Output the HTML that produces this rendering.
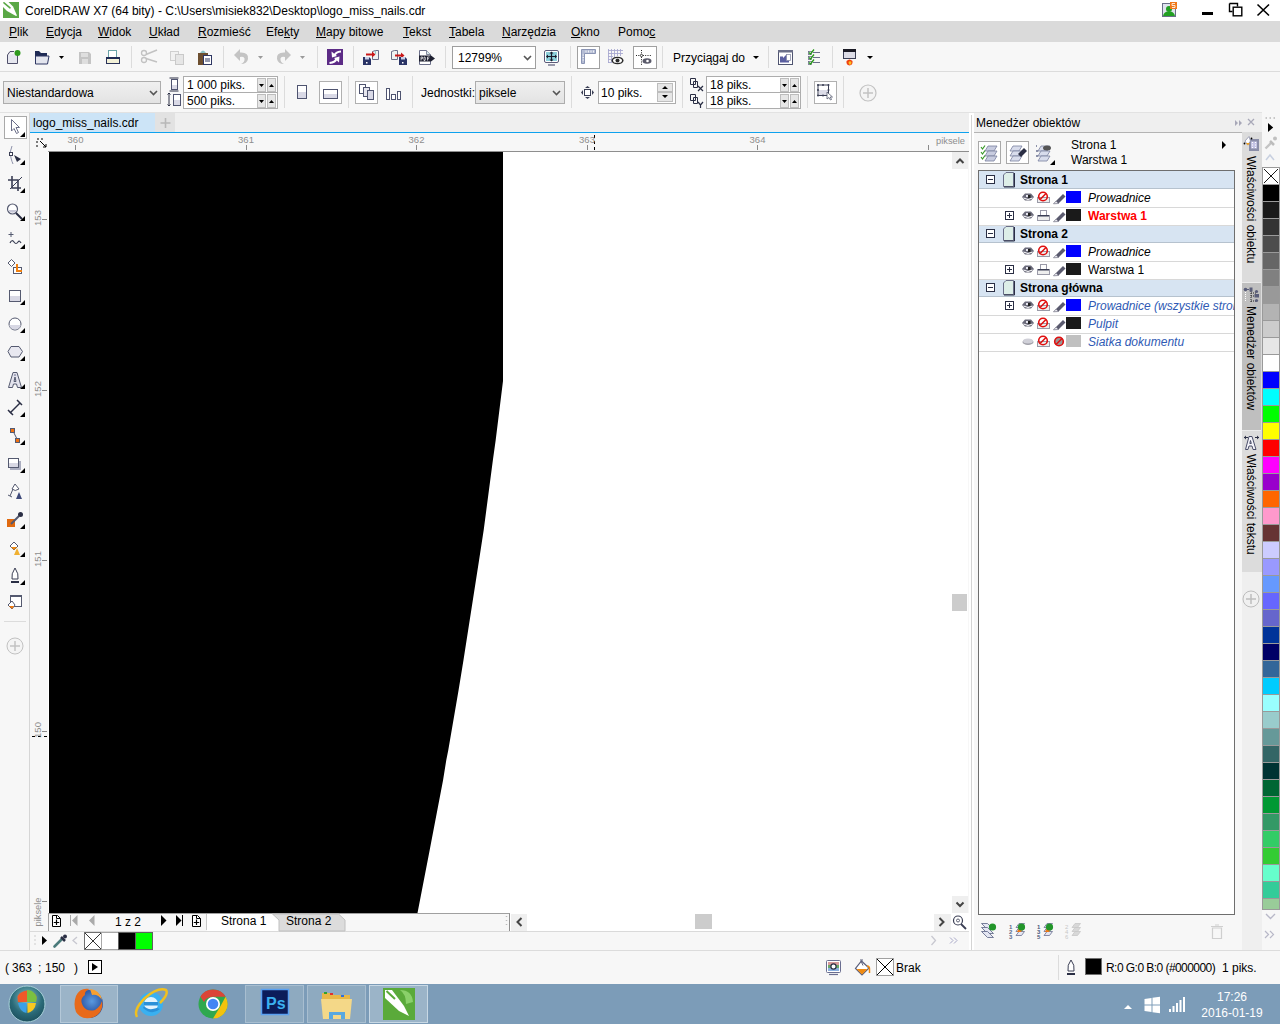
<!DOCTYPE html>
<html><head><meta charset="utf-8">
<style>
*{box-sizing:border-box;margin:0;padding:0}
html,body{width:1280px;height:1024px;overflow:hidden;background:#f7f7f7;font-family:"Liberation Sans",sans-serif;font-size:12px;color:#000}
.a{position:absolute}
.t{position:absolute;white-space:nowrap;line-height:14px}
#title{left:0;top:0;width:1280px;height:21px;background:#fff}
#menu{left:0;top:21px;width:1280px;height:21px;background:#dadada}
#tb1{left:0;top:42px;width:1280px;height:30px;background:#f7f7f7;border-bottom:1px solid #dcdcdc}
#tb2{left:0;top:72px;width:1280px;height:40px;background:#f7f7f7}
.sep{position:absolute;width:1px;background:#dcdcdc}
u{text-decoration:underline;text-underline-offset:1px;text-decoration-thickness:1px}
.box{position:absolute;background:#fff;border:1px solid #a0a0a0}
.row{position:absolute;left:979px;width:255px;height:18px;border-bottom:1px solid #e3e3e3;background:#fff}
.hdr{background:#d6e4f0;border-bottom:1px solid #b8c6d4}
.sw{position:absolute;left:1262px;width:17px;height:17px;border:1px solid #a8a8a8}
</style></head><body>
<!-- title bar -->
<div id="title" class="a">
  <svg class="a" style="left:3px;top:2px" width="16" height="16" viewBox="0 0 16 16"><rect width="16" height="16" fill="#5aa846"/><path d="M0 0 L5.5 0 L10 4.5 L14 13.5 L13 14 L4 9 L0 5 Z" fill="#fff"/><path d="M1 0.8 L7 5.8" stroke="#5aa846" stroke-width="1.6" stroke-linecap="round"/></svg>
  <div class="t" style="left:25px;top:4px">CorelDRAW X7 (64 bity) - C:\Users\misiek832\Desktop\logo_miss_nails.cdr</div>
</div>
<svg class="a" style="left:1150px;top:0" width="130" height="21" viewBox="1150 0 130 21">
 <rect x="1162.5" y="3.5" width="13" height="13" fill="#dfe3ee" stroke="#6a6e88"/>
 <circle cx="1169" cy="9" r="3" fill="#22a022"/><path d="M1163 16 Q1164 11 1169 11.5 Q1174 11 1175 16 Z" fill="#22a022"/>
 <rect x="1170" y="2" width="7" height="7" fill="#f07818"/>
 <path d="M1175 3.5 H1172 V5.5 H1175 V7.5 H1172" fill="none" stroke="#fff" stroke-width=".8"/>
 <rect x="1202" y="12" width="11" height="3" fill="#000"/>
 <path d="M1229.5 3.5 H1237.5 V6.5 M1229.5 3.5 V11.5 H1232.5" fill="none" stroke="#000" stroke-width="1.4"/>
 <rect x="1233.2" y="7.2" width="8.6" height="8.6" fill="#fff" stroke="#000" stroke-width="1.4"/>
 <path d="M1257.5 4.5 L1269 15.5 M1269 4.5 L1257.5 15.5" stroke="#000" stroke-width="1.6"/>
</svg>
<!-- menu -->
<div id="menu" class="a">
  <div class="t" style="left:9px;top:4px"><u>P</u>lik</div>
  <div class="t" style="left:46px;top:4px"><u>E</u>dycja</div>
  <div class="t" style="left:98px;top:4px"><u>W</u>idok</div>
  <div class="t" style="left:149px;top:4px"><u>U</u>kład</div>
  <div class="t" style="left:198px;top:4px"><u>R</u>ozmieść</div>
  <div class="t" style="left:266px;top:4px">Efe<u>k</u>ty</div>
  <div class="t" style="left:316px;top:4px"><u>M</u>apy bitowe</div>
  <div class="t" style="left:403px;top:4px"><u>T</u>ekst</div>
  <div class="t" style="left:449px;top:4px"><u>T</u>abela</div>
  <div class="t" style="left:502px;top:4px"><u>N</u>arzędzia</div>
  <div class="t" style="left:571px;top:4px"><u>O</u>kno</div>
  <div class="t" style="left:618px;top:4px">Pomo<u>c</u></div>
</div>
<div id="tb1" class="a"></div>
<!-- TB1 icons -->
<svg class="a" style="left:0;top:42px" width="880" height="29" viewBox="0 42 880 29">
 <!-- new -->
 <path d="M7.5 55 L7.5 63.5 L17.5 63.5 L17.5 53 M7.5 55 L10 51.5 L14 51.5" fill="#e6e7ef" stroke="#4f4f6a" stroke-width="1"/>
 <circle cx="17.5" cy="53" r="3" fill="#2e9a1d"/>
 <!-- open -->
 <path d="M35 51 L39 51 L41 53 L47 53 L47 57 L35 57 Z" fill="#1f2b55"/>
 <path d="M35.5 64 L35.5 56 L49 56 L47.5 64 Z" fill="#e3e5ee" stroke="#2e3763" stroke-width="1"/>
 <path d="M59 56 L64 56 L61.5 59 Z" fill="#000"/>
 <!-- save gray -->
 <path d="M79 52 L89 52 L91 54 L91 64 L79 64 Z" fill="#c4c4c4"/>
 <rect x="81" y="53" width="7" height="4" fill="#dedede"/>
 <rect x="82" y="59" width="6" height="5" fill="#dedede"/>
 <!-- print -->
 <rect x="108.5" y="50.5" width="8" height="7" fill="#fff" stroke="#6aa3a8"/>
 <rect x="106.5" y="57.5" width="13" height="6" fill="#f3f1d8" stroke="#2a3359"/>
 <rect x="106" y="57" width="14" height="2" fill="#1f2b55"/>
 <!-- sep -->
 <rect x="131" y="46" width="1" height="22" fill="#dcdcdc"/>
 <!-- scissors gray -->
 <circle cx="144" cy="53" r="2.5" fill="none" stroke="#c2c2c2" stroke-width="1.3"/>
 <circle cx="144" cy="60" r="2.5" fill="none" stroke="#c2c2c2" stroke-width="1.3"/>
 <path d="M146 54.5 L157 50 M146 58.5 L157 62" stroke="#c2c2c2" stroke-width="1.5"/>
 <!-- copy gray -->
 <rect x="170.5" y="51.5" width="8" height="9" fill="#f1f1f1" stroke="#cfcfcf"/>
 <rect x="175.5" y="54.5" width="8" height="10" fill="#e6e6e6" stroke="#c9c9c9"/>
 <!-- paste -->
 <rect x="198" y="53" width="10" height="12" fill="#6d4f30"/>
 <path d="M200 53 Q203 48 206 53 Z" fill="#8dc3c6"/>
 <rect x="203.5" y="55.5" width="8" height="9" fill="#fff" stroke="#2e3763"/>
 <path d="M205 59 H210 M205 61 H210" stroke="#2e3763"/>
 <rect x="223" y="46" width="1" height="22" fill="#dcdcdc"/>
 <!-- undo/redo gray -->
 <path d="M234 55 L240 49 L240 52.5 Q249 52 248 59 Q247 64 241 64 Q245 62 244.5 58.5 Q244 56 240 57 L240 61 Z" fill="#c4c4c4"/>
 <path d="M258 56 L263 56 L260.5 59 Z" fill="#9a9a9a"/>
 <path d="M291 55 L285 49 L285 52.5 Q276 52 277 59 Q278 64 284 64 Q280 62 280.5 58.5 Q281 56 285 57 L285 61 Z" fill="#c4c4c4"/>
 <path d="M300 56 L305 56 L302.5 59 Z" fill="#9a9a9a"/>
 <rect x="317" y="46" width="1" height="22" fill="#dcdcdc"/>
 <!-- corel connect -->
 <rect x="327" y="49" width="16" height="16" fill="#5c2b86"/>
 <path d="M341 51.5 Q335.5 52 334.5 55.5" fill="none" stroke="#fff" stroke-width="2.2"/>
 <path d="M331.5 51.5 L332 57.5 L337 56 Z" fill="#fff"/>
 <path d="M329.5 63 Q335.5 62.5 336.5 58.5" fill="none" stroke="#fff" stroke-width="2.2"/>
 <path d="M339.5 56.5 L339 62.5 L334 58 Z" fill="#fff"/>
 <rect x="353" y="46" width="1" height="22" fill="#dcdcdc"/>
 <!-- import -->
 <path d="M372.5 51.5 L375.5 50.5 H378.5 V59.5 H372.5 Z" fill="#eef2f2" stroke="#6a6e88"/>
 <path d="M375.5 51 V54" stroke="#7ac0c0" stroke-width=".8"/>
 <path d="M366 54.5 H373" stroke="#c81818" stroke-width="2"/><path d="M372 51.5 L375.5 54.5 L372 57.5 Z" fill="#c81818"/>
 <path d="M363 57 H369 L371 59 V65 H363 Z" fill="#2a3466"/><rect x="365" y="57" width="4" height="2.5" fill="#c8d0e8"/><rect x="366" y="62" width="1.5" height="1.5" fill="#fff"/>
 <!-- export -->
 <path d="M391.5 51.5 L394.5 50.5 H397.5 V59.5 H391.5 Z" fill="#eef2f2" stroke="#6a6e88"/>
 <path d="M395 55.5 H402" stroke="#c81818" stroke-width="2"/><path d="M401 52.5 L404.5 55.5 L401 58.5 Z" fill="#c81818"/>
 <path d="M399 57 H405 L407 59 V65 H399 Z" fill="#2a3466"/><rect x="401" y="57" width="4" height="2.5" fill="#c8d0e8"/><rect x="402" y="62" width="1.5" height="1.5" fill="#fff"/>
 <!-- pdf -->
 <path d="M419.5 50.5 H426.5 L430.5 54.5 V64.5 H419.5 Z" fill="#fff" stroke="#6a6e88"/>
 <path d="M426.5 50.5 V54.5 H430.5" fill="#d8e8e8" stroke="#6a6e88" stroke-width=".8"/>
 <path d="M419 55.5 H431 L435 58.5 L431 61.5 H419 Z" fill="#1e2030"/>
 <path d="M421 57 V60.5 M421 57 H422.5 V58.7 H421 M424 57 V60.5 H425 Q426 58.7 425 57 Z M427.5 60.5 V57 H429.5 M427.5 58.7 H429" fill="none" stroke="#fff" stroke-width=".7"/>
 <rect x="445" y="46" width="1" height="22" fill="#dcdcdc"/>
 <!-- zoom combo -->
 <rect x="452.5" y="46.5" width="83" height="22" fill="#fff" stroke="#9e9e9e"/>
 <path d="M524 56 L527.5 59.5 L531 56" fill="none" stroke="#555" stroke-width="1.6"/>
 <!-- fullscreen -->
 <rect x="544.5" y="50.5" width="14" height="12" rx="1.5" fill="#fff" stroke="#5a5a78"/>
 <rect x="546" y="52" width="11" height="9" fill="#8ccfda"/>
 <path d="M548 65 H555" stroke="#5a5a78" stroke-width="1.2"/>
 <path d="M551.5 52.5 V60.5 M547 56.5 H556" stroke="#1a1a2a" stroke-width="1.2"/>
 <path d="M551.5 51.5 L549.5 53.5 H553.5 Z M551.5 61.5 L549.5 59.5 H553.5 Z M546 56.5 L548 54.5 V58.5 Z M557 56.5 L555 54.5 V58.5 Z" fill="#1a1a2a"/>
 <rect x="570" y="46" width="1" height="22" fill="#dcdcdc"/>
 <!-- ruler framed -->
 <rect x="577.5" y="46.5" width="22" height="22" fill="#fff" stroke="#a0a0a0"/>
 <path d="M581.5 49.5 H595.5 V53.5 H584.5 V63.5 H581.5 Z" fill="#b4bcd4" stroke="#8a94b4" stroke-width="1"/>
 <path d="M586 50.5 V52.5 M588.5 50.5 V52.5 M591 50.5 V52.5 M593.5 50.5 V52.5 M582.5 55 H584 M582.5 57.5 H584 M582.5 60 H584" stroke="#fff" stroke-width=".8"/>
 <!-- grid eye -->
 <path d="M608.5 49 V63 M611.5 49 V63 M614.5 49 V58 M617.5 49 V56 M620.5 49 V56 M608 50.5 H623 M608 53.5 H623 M608 56.5 H613 M608 59.5 H612 M608 62.5 H611" stroke="#a8a8d0" stroke-width=".9"/>
 <ellipse cx="617.5" cy="60.5" rx="6" ry="3.8" fill="#2a2a2a"/><ellipse cx="617.5" cy="60.5" rx="4.5" ry="2.5" fill="#fff"/><circle cx="617.5" cy="60.5" r="2" fill="#2a2a2a"/>
 <!-- guides framed -->
 <rect x="633.5" y="46.5" width="23" height="22" fill="#fff" stroke="#a0a0a0"/>
 <path d="M641.5 50 V65 M636 55.5 H651" stroke="#222" stroke-dasharray="1 1.3" stroke-width="1"/>
 <circle cx="641.5" cy="55.5" r="1.2" fill="#fff" stroke="#222" stroke-width=".8"/>
 <ellipse cx="647" cy="61" rx="4.5" ry="2.8" fill="#5a5a6a"/><circle cx="647.5" cy="61" r="1.3" fill="#fff"/>
 <rect x="662" y="46" width="1" height="22" fill="#dcdcdc"/>
 <path d="M753 56 L759 56 L756 59 Z" fill="#000"/>
 <rect x="768" y="46" width="1" height="22" fill="#dcdcdc"/>
 <!-- options window -->
 <rect x="778.5" y="50.5" width="14" height="14" fill="#fff" stroke="#4f5470"/>
 <rect x="778" y="50" width="15" height="2.5" fill="#6a6e88"/>
 <path d="M780 62.5 V56.5 H783 V58 L786 55 H789 V62.5 Z" fill="#5a5ea0"/>
 <rect x="786.5" y="54.5" width="4" height="6" fill="#fff" stroke="#8a8ea8" stroke-width=".8"/>
 <!-- checklist -->
 <rect x="808.5" y="51.5" width="3" height="3" fill="#fff" stroke="#6a6e88" stroke-width=".8"/>
 <rect x="808.5" y="56.5" width="3" height="3" fill="#fff" stroke="#6a6e88" stroke-width=".8"/>
 <rect x="808.5" y="61.5" width="3" height="3" fill="#fff" stroke="#6a6e88" stroke-width=".8"/>
 <path d="M809 52.5 L810.5 54 L814 49.5 M809 57.5 L810.5 59 L814 54.5 M809 62.5 L810.5 64 L814 59.5" fill="none" stroke="#2a9a1a" stroke-width="1.3"/>
 <path d="M813 52.5 H820 M813 57.5 H820 M813 62.5 H820" stroke="#6a6e88" stroke-width="1"/>
 <rect x="832" y="46" width="1" height="22" fill="#dcdcdc"/>
 <!-- window flame -->
 <rect x="843.5" y="49.5" width="12" height="9" fill="#dcdce6" stroke="#3a3e54"/>
 <rect x="843" y="49" width="13" height="3" fill="#1a1a24"/>
 <path d="M846.5 61 Q849.5 58 852.5 61 Q853 65 849.5 65.5 Q846 65 846.5 61 Z" fill="#f04010"/>
 <path d="M848.5 62 Q850 60.5 851.5 62 Q851.5 64.5 850 65 Q848.5 64.5 848.5 62 Z" fill="#f8c020"/>
 <path d="M867 56 L873 56 L870 59 Z" fill="#000"/>
</svg>
<div class="t" style="left:458px;top:51px;font-size:12px">12799%</div>
<div class="t" style="left:673px;top:51px;font-size:12px">Przyciągaj do</div>
<div id="tb2" class="a"></div>
<svg class="a" style="left:0;top:72px" width="900" height="40" viewBox="0 72 900 40">
 <defs><linearGradient id="cg" x1="0" y1="0" x2="0" y2="1"><stop offset="0" stop-color="#f0f0f0"/><stop offset="1" stop-color="#e3e3e3"/></linearGradient></defs>
 <rect x="3.5" y="81.5" width="157" height="22" fill="url(#cg)" stroke="#adadad"/>
 <path d="M150 91 L153.5 94.5 L157 91" fill="none" stroke="#555" stroke-width="1.6"/>
 <!-- page size icons -->
 <path d="M169.5 78 H178.5 M169.5 91 H178.5" stroke="#2a2e44"/>
 <rect x="171.5" y="79.5" width="6" height="10" fill="#fff" stroke="#4f5470"/><rect x="172" y="85" width="5" height="4" fill="#d9d9e6"/>
 <path d="M169 93 V106" stroke="#2a2e44"/><path d="M167.5 94.5 L169 93 L170.5 94.5 M167.5 104.5 L169 106 L170.5 104.5" fill="none" stroke="#2a2e44"/>
 <rect x="173.5" y="94.5" width="7" height="11" fill="#fff" stroke="#4f5470"/><rect x="174" y="100" width="6" height="5" fill="#d9d9e6"/>
 <rect x="183.5" y="76.5" width="94" height="32" fill="#fff" stroke="#adadad"/>
 <path d="M184 92.5 H277" stroke="#adadad"/>
 <rect x="257.5" y="78.5" width="8" height="13" fill="#e6e6e6" stroke="#bdbdbd"/>
 <rect x="267.5" y="78.5" width="8" height="13" fill="#e6e6e6" stroke="#bdbdbd"/>
 <rect x="257.5" y="94.5" width="8" height="13" fill="#e6e6e6" stroke="#bdbdbd"/>
 <rect x="267.5" y="94.5" width="8" height="13" fill="#e6e6e6" stroke="#bdbdbd"/>
 <path d="M259 84 H264 L261.5 87 Z M269 87 H274 L271.5 84 Z M259 100 H264 L261.5 103 Z M269 103 H274 L271.5 100 Z" fill="#000"/>
 <rect x="284" y="76" width="1" height="32" fill="#dcdcdc"/>
 <!-- portrait -->
 <rect x="297.5" y="85.5" width="9" height="13" fill="#fff" stroke="#4f5470"/><rect x="298" y="92" width="8" height="6" fill="#d9d9e6"/>
 <rect x="319.5" y="81.5" width="22" height="22" fill="#fff" stroke="#b0b0b0"/>
 <rect x="323.5" y="89.5" width="14" height="9" fill="#fff" stroke="#4f5470"/><rect x="324" y="94" width="13" height="4" fill="#d9d9e6"/>
 <rect x="348" y="76" width="1" height="32" fill="#dcdcdc"/>
 <rect x="355.5" y="81.5" width="22" height="22" fill="#fff" stroke="#b0b0b0"/>
 <rect x="359.5" y="84.5" width="6" height="9" fill="#fff" stroke="#4f5470"/>
 <rect x="363.5" y="87.5" width="6" height="9" fill="#e6e6ee" stroke="#4f5470"/>
 <rect x="367.5" y="90.5" width="6" height="9" fill="#d9d9e6" stroke="#4f5470"/>
 <rect x="386.5" y="88.5" width="3" height="11" fill="#fff" stroke="#4f5470"/>
 <rect x="391.5" y="94.5" width="4" height="5" fill="#fff" stroke="#4f5470"/>
 <rect x="397.5" y="91.5" width="3" height="8" fill="#fff" stroke="#4f5470"/>
 <rect x="412" y="76" width="1" height="32" fill="#dcdcdc"/>
 <rect x="475.5" y="81.5" width="89" height="22" fill="url(#cg)" stroke="#adadad"/>
 <path d="M553 91 L556.5 94.5 L560 91" fill="none" stroke="#555" stroke-width="1.6"/>
 <rect x="571" y="76" width="1" height="32" fill="#dcdcdc"/>
 <!-- nudge -->
 <rect x="584.5" y="89.5" width="6" height="6" fill="#fff" stroke="#3a3e54"/>
 <path d="M587.5 86 L585 88 H590 Z M587.5 99 L585 97 H590 Z M581 92.5 L583 90 V95 Z M594 92.5 L592 90 V95 Z" fill="#3a3e54"/>
 <rect x="598.5" y="81.5" width="77" height="22" fill="#fff" stroke="#adadad"/>
 <rect x="657.5" y="83.5" width="15" height="8" fill="#e6e6e6" stroke="#bdbdbd"/>
 <rect x="657.5" y="92.5" width="15" height="9" fill="#e6e6e6" stroke="#bdbdbd"/>
 <path d="M662 89 H668 L665 86 Z M662 95 H668 L665 98 Z" fill="#000"/>
 <rect x="682" y="76" width="1" height="32" fill="#dcdcdc"/>
 <!-- xy dup icons -->
 <path d="M690.5 78.5 H695.5 V84.5 H690.5 Z M693.5 81.5 H697.5 V87.5 H693.5 Z" fill="none" stroke="#2a2e44"/>
 <path d="M698 86 L703 91 M703 86 L698 91" stroke="#2a2e44" stroke-width="1.2"/>
 <path d="M690.5 94.5 H695.5 V100.5 H690.5 Z M693.5 97.5 H697.5 V103.5 H693.5 Z" fill="none" stroke="#2a2e44"/>
 <path d="M698 102 L700.5 105 L703 102 M700.5 105 V108" fill="none" stroke="#2a2e44" stroke-width="1.2"/>
 <rect x="706.5" y="76.5" width="94" height="32" fill="#fff" stroke="#adadad"/>
 <path d="M707 92.5 H800" stroke="#adadad"/>
 <rect x="780.5" y="78.5" width="8" height="13" fill="#e6e6e6" stroke="#bdbdbd"/>
 <rect x="790.5" y="78.5" width="8" height="13" fill="#e6e6e6" stroke="#bdbdbd"/>
 <rect x="780.5" y="94.5" width="8" height="13" fill="#e6e6e6" stroke="#bdbdbd"/>
 <rect x="790.5" y="94.5" width="8" height="13" fill="#e6e6e6" stroke="#bdbdbd"/>
 <path d="M782 84 H787 L784.5 87 Z M792 87 H797 L794.5 84 Z M782 100 H787 L784.5 103 Z M792 103 H797 L794.5 100 Z" fill="#000"/>
 <rect x="807" y="76" width="1" height="32" fill="#dcdcdc"/>
 <rect x="814.5" y="81.5" width="22" height="22" fill="#fff" stroke="#b0b0b0"/>
 <rect x="818" y="85" width="10.5" height="10.5" fill="#fff" stroke="#3a3e54" stroke-width="1"/>
 <rect x="819" y="90" width="9" height="5" fill="#dcdce8"/>
 <circle cx="818" cy="85" r="1" fill="#3a3e54"/><circle cx="823" cy="85" r="1" fill="#3a3e54"/><circle cx="828.5" cy="85" r="1" fill="#3a3e54"/>
 <circle cx="818" cy="90" r="1" fill="#3a3e54"/><circle cx="828.5" cy="90" r="1" fill="#3a3e54"/>
 <circle cx="818" cy="95.5" r="1" fill="#3a3e54"/><circle cx="823" cy="95.5" r="1" fill="#3a3e54"/>
 <path d="M827 92 L827 99 L829 97.5 L830.5 100 L831.5 99.5 L830.3 97 L832.5 97 Z" fill="#fff" stroke="#555a70" stroke-width=".8"/>
 <rect x="843" y="76" width="1" height="32" fill="#dcdcdc"/>
 <circle cx="868" cy="93" r="8" fill="#f4f4f4" stroke="#c2c2c2" stroke-width="1.2"/>
 <path d="M868 88 V98 M863 93 H873" stroke="#c2c2c2" stroke-width="1.5"/>
</svg>
<div class="t" style="left:7px;top:86px;font-size:12px">Niestandardowa</div>
<div class="t" style="left:187px;top:78px;font-size:12px">1 000 piks.</div>
<div class="t" style="left:187px;top:94px;font-size:12px">500 piks.</div>
<div class="t" style="left:421px;top:86px;font-size:12px">Jednostki:</div>
<div class="t" style="left:479px;top:86px;font-size:12px">piksele</div>
<div class="t" style="left:601px;top:86px;font-size:12px">10 piks.</div>
<div class="t" style="left:710px;top:78px;font-size:12px">18 piks.</div>
<div class="t" style="left:710px;top:94px;font-size:12px">18 piks.</div>

<!-- toolbox -->
<div class="a" style="left:0;top:112px;width:30px;height:838px;background:#f7f7f7;border-right:1px solid #d6d6d6"></div>
<svg class="a" style="left:0;top:112px" width="29" height="560" viewBox="0 112 29 560">
 <rect x="4.5" y="116.5" width="22" height="22" fill="#fff" stroke="#a9a9a9"/>
 <path d="M11.5 119.5 L11.5 131 L14 128.5 L16.5 133.5 L18.5 132.5 L16 127.5 L19.5 127.5 Z" fill="#fff" stroke="#6a6e88" stroke-width="1"/>
 <path d="M20 137 L25 132 L25 137 Z" fill="#000"/>
 <!-- shape -->
 <path d="M12 146 Q9 152 11 158 Q12 162 13 164" fill="none" stroke="#8e92aa" stroke-width="1"/>
 <rect x="9.5" y="152.5" width="3" height="3" fill="#fff" stroke="#3a3e54"/>
 <path d="M14 155 L21 159 L17 162 Z" fill="#2a2e44"/>
 <path d="M20 165 L25 160 L25 165 Z" fill="#000"/>
 <!-- crop -->
 <path d="M12 176 V188 H21 M8 180 H18 V191" fill="none" stroke="#3a3e54" stroke-width="1.6"/>
 <path d="M10 189 L22 177" stroke="#3a3e54" stroke-width="1"/>
 <path d="M20 193 L25 188 L25 193 Z" fill="#000"/>
 <!-- zoom -->
 <circle cx="12.5" cy="209" r="5" fill="#fff" stroke="#555a70" stroke-width="1.2"/>
 <path d="M8 210 A5 5 0 0 0 17 210 Z" fill="#c8c8d8"/>
 <path d="M16 213 L22 219" stroke="#2a2e44" stroke-width="2"/>
 <path d="M20 221 L25 216 L25 221 Z" fill="#000"/>
 <!-- freehand -->
 <path d="M8.5 234.5 H13.5 M11 232 V237" stroke="#555a70" stroke-width="1"/>
 <path d="M10 243 Q12 239 14 242 Q16 245 18 242 Q19.5 240 21 243" fill="none" stroke="#3a3e54" stroke-width="1.2"/>
 <path d="M20 249 L25 244 L25 249 Z" fill="#000"/>
 <!-- smart fill -->
 <path d="M8 263 L11.5 259.5 L15 263 L11.5 266.5 Z" fill="#fff" stroke="#555a70"/>
 <rect x="13.5" y="267.5" width="8" height="6" fill="#fff" stroke="#555a70"/>
 <path d="M17 264 V271 H22" fill="none" stroke="#f08010" stroke-width="2"/>
 <!-- rectangle -->
 <rect x="9.5" y="290.5" width="11" height="11" fill="#fff" stroke="#555a70" stroke-width="1"/>
 <rect x="10" y="296" width="10" height="5" fill="#d8d8e4"/>
 <path d="M20 305 L25 300 L25 305 Z" fill="#000"/>
 <!-- ellipse -->
 <circle cx="15" cy="324" r="6" fill="#fff" stroke="#555a70" stroke-width="1"/>
 <path d="M9.2 325 A6 6 0 0 0 20.8 325 Z" fill="#d8d8e4"/>
 <path d="M20 333 L25 328 L25 333 Z" fill="#000"/>
 <!-- polygon -->
 <path d="M11 346.5 H19 L22.5 351.5 L19 357 H11 L8 351.5 Z" fill="#e8e8f0" stroke="#555a70"/>
 <path d="M20 361 L25 356 L25 361 Z" fill="#000"/>
 <!-- text -->
 <path d="M8.5 387.5 L13 372.5 L17 372.5 L21.5 387.5 L17.5 387.5 L16.5 384 L13.5 384 L12.5 387.5 Z M14 381.5 H16 L15 377 Z" fill="#e4e4ee" fill-rule="evenodd" stroke="#555a70" stroke-width="1"/><path d="M14.2 376 L15 374 L15.8 376" stroke="#8a8ea8" fill="none" stroke-width=".8"/>
 <path d="M20 389 L25 384 L25 389 Z" fill="#000"/>
 <!-- dimension -->
 <path d="M10 413 L20 403" stroke="#2a2e44" stroke-width="1.5"/>
 <path d="M8 410 L13 415 M17 400 L22 405" stroke="#2a2e44" stroke-width="1.5"/>
 <path d="M20 417 L25 412 L25 417 Z" fill="#000"/>
 <!-- connector -->
 <path d="M12.5 430 L17.5 440" stroke="#555a70"/>
 <rect x="10.5" y="428.5" width="4" height="4" fill="#f07010" stroke="#555a70"/>
 <rect x="15.5" y="438.5" width="4" height="4" fill="#f07010" stroke="#555a70"/>
 <path d="M20 445 L25 440 L25 445 Z" fill="#000"/>
 <!-- shadow -->
 <rect x="10" y="461" width="11" height="9" fill="#8a8ea8" opacity=".7"/>
 <rect x="8.5" y="458.5" width="10" height="9" fill="#fff" stroke="#555a70"/>
 <rect x="9" y="463" width="9" height="4" fill="#d8d8e4"/>
 <path d="M20 473 L25 468 L25 473 Z" fill="#000"/>
 <!-- transparency -->
 <path d="M12 489 Q15 492 19 489 L15 484 Z" fill="#fff" stroke="#555a70"/>
 <path d="M13 489 L10 496 M8 495 L12 497" stroke="#555a70"/>
 <path d="M16 499 L19 492 L22 499 Z" fill="#3e4a7a"/>
 <!-- eyedropper -->
 <rect x="7" y="519" width="8" height="8" fill="#e06a10"/>
 <path d="M11 524 L19 516" stroke="#555a70" stroke-width="2"/>
 <circle cx="20.5" cy="514.5" r="2.5" fill="#2a2e44"/>
 <path d="M20 529 L25 524 L25 529 Z" fill="#000"/>
 <!-- fill -->
 <path d="M10 546 L14 542 L18 546 L14 550 Z" fill="#fff" stroke="#555a70"/>
 <path d="M11 547 L14 550 L17 547 Z" fill="#f08a10"/>
 <path d="M14 555 L17 548 L20 555 Z" fill="#f0b030"/>
 <path d="M20 557 L25 552 L25 557 Z" fill="#000"/>
 <!-- pen -->
 <path d="M15 568 Q19 574 18 579 H12 Q11 574 15 568 Z" fill="#fff" stroke="#3a3e54" stroke-width="1"/>
 <rect x="11" y="581" width="8" height="2" fill="#2a2e44"/>
 <path d="M20 585 L25 580 L25 585 Z" fill="#000"/>
 <!-- interactive -->
 <rect x="10.5" y="595.5" width="11" height="11" fill="#fff" stroke="#555a70"/>
 <rect x="10" y="595" width="12" height="2" fill="#555a70"/>
 <path d="M8 605 L12 601 L15 605 L12 609 Z" fill="#fff" stroke="#555a70"/>
 <path d="M9 606 L12 609 L14 606 Z" fill="#f07a10"/>
 <rect x="4" y="621" width="22" height="1" fill="#dcdcdc"/>
 <circle cx="15" cy="646" r="8" fill="#f4f4f4" stroke="#c2c2c2" stroke-width="1"/>
 <path d="M15 641 V651 M10 646 H20" stroke="#c2c2c2" stroke-width="1.5"/>
</svg>

<!-- doc tab row -->
<div class="a" style="left:30px;top:113px;width:939px;height:20px;background:#efefef;border-bottom:1px solid #0ea2ee"></div>
<div class="a" style="left:30px;top:113px;width:125px;height:19px;background:#cce4f7"></div>
<div class="t" style="left:33px;top:116px">logo_miss_nails.cdr</div>
<div class="a" style="left:155px;top:113px;width:20px;height:19px;background:#e2e2e2"></div>
<svg class="a" style="left:155px;top:113px" width="20" height="19"><path d="M10.5 5 V15 M5.5 10 H15.5" stroke="#b8b8b8" stroke-width="1.6"/></svg>

<!-- rulers -->
<div class="a" style="left:30px;top:133px;width:939px;height:18px;background:#f7f7f7"></div>
<div class="a" style="left:48px;top:151px;width:921px;height:1px;background:#8e8e8e"></div>
<div class="a" style="left:30px;top:152px;width:18px;height:779px;background:#f7f7f7"></div>
<svg class="a" style="left:30px;top:133px" width="939" height="798" viewBox="30 133 939 798">
 <rect x="75" y="145" width="1" height="5" fill="#8a8a8a"/>
 <rect x="246" y="145" width="1" height="5" fill="#8a8a8a"/>
 <rect x="416" y="145" width="1" height="5" fill="#8a8a8a"/>
 <rect x="587" y="145" width="1" height="5" fill="#8a8a8a"/>
 <rect x="757" y="145" width="1" height="5" fill="#8a8a8a"/>
 <rect x="928" y="145" width="1" height="5" fill="#8a8a8a"/>
 <path d="M594.5 135 V138 M594.5 141 V144 M594.5 147 V150" stroke="#000" stroke-width="1"/>
 <rect x="42" y="219" width="5" height="1" fill="#8a8a8a"/>
 <rect x="42" y="390" width="5" height="1" fill="#8a8a8a"/>
 <rect x="42" y="560" width="5" height="1" fill="#8a8a8a"/>
 <rect x="42" y="731" width="5" height="1" fill="#8a8a8a"/>
 <rect x="42" y="901" width="5" height="1" fill="#8a8a8a"/>
 <path d="M32 736.5 H35 M38 736.5 H41 M44 736.5 H47" stroke="#000" stroke-width="1"/>
 <path d="M37 139 H39 M41 139 H43 M37 141 V143 M37 145 V147 M40 141 L46 147 M46 144 V147 H43" fill="none" stroke="#000" stroke-width="1"/>
</svg>
<div class="t" style="left:55.5px;top:132.5px;width:40px;text-align:center;font-size:9.5px;color:#8e8e8e">360</div>
<div class="t" style="left:226px;top:132.5px;width:40px;text-align:center;font-size:9.5px;color:#8e8e8e">361</div>
<div class="t" style="left:396.5px;top:132.5px;width:40px;text-align:center;font-size:9.5px;color:#8e8e8e">362</div>
<div class="t" style="left:567px;top:132.5px;width:40px;text-align:center;font-size:9.5px;color:#8e8e8e">363</div>
<div class="t" style="left:737.5px;top:132.5px;width:40px;text-align:center;font-size:9.5px;color:#8e8e8e">364</div>
<div class="t" style="left:929px;top:134px;width:36px;text-align:right;font-size:9.3px;color:#8e8e8e">piksele</div>
<div class="t" style="left:19px;top:211px;width:40px;height:14px;text-align:center;font-size:9.5px;color:#8e8e8e;transform:rotate(-90deg);transform-origin:20px 7px;left:17.5px">153</div>
<div class="t" style="left:19px;top:382px;width:40px;height:14px;text-align:center;font-size:9.5px;color:#8e8e8e;transform:rotate(-90deg);transform-origin:20px 7px;left:17.5px">152</div>
<div class="t" style="left:19px;top:552px;width:40px;height:14px;text-align:center;font-size:9.5px;color:#8e8e8e;transform:rotate(-90deg);transform-origin:20px 7px;left:17.5px">151</div>
<div class="t" style="left:19px;top:723px;width:40px;height:14px;text-align:center;font-size:9.5px;color:#8e8e8e;transform:rotate(-90deg);transform-origin:20px 7px;left:17.5px">150</div>
<div class="t" style="left:18px;top:905px;width:40px;height:14px;text-align:center;font-size:9.3px;color:#8e8e8e;transform:rotate(-90deg);transform-origin:20px 7px">piksele</div>

<!-- canvas -->
<div class="a" style="left:48px;top:152px;width:920px;height:761px;background:#fff;overflow:hidden">
<svg width="920" height="761" style="position:absolute;left:0;top:0"><polygon points="1,0 455,0 455.0,229.0 447.7,288.0 444.9,308.0 435.7,378.0 431.1,408.0 415.5,508.0 410.6,538.0 400.3,598.0 398.3,608.0 395.1,628.0 383.6,688.0 381.7,698.0 369.5,761.0 1,761" fill="#000"/></svg>
</div>
<!-- vscroll -->
<div class="a" style="left:952px;top:152px;width:16px;height:17px;background:#efefef"></div>
<div class="a" style="left:952px;top:896px;width:16px;height:17px;background:#efefef"></div>
<div class="a" style="left:952px;top:594px;width:15px;height:17px;background:#cccccc"></div>
<svg class="a" style="left:952px;top:152px" width="16" height="761" viewBox="952 152 16 761">
 <path d="M956.5 163 L960 159.5 L963.5 163" fill="none" stroke="#444" stroke-width="2"/>
 <path d="M956.5 902.5 L960 906 L963.5 902.5" fill="none" stroke="#444" stroke-width="2"/>
</svg>
<!-- page nav bar -->
<div class="a" style="left:48px;top:913px;width:462px;height:18px;background:#f7f7f7;border-top:1px solid #a0a0a0;border-left:1px solid #a0a0a0;border-right:1px solid #8e8e8e"></div>
<div class="a" style="left:510px;top:913px;width:459px;height:18px;background:#fff"></div>
<div class="a" style="left:511px;top:914px;width:16px;height:17px;background:#efefef"></div>
<div class="a" style="left:934px;top:914px;width:17px;height:17px;background:#efefef"></div>
<div class="a" style="left:695px;top:914px;width:17px;height:15px;background:#cccccc"></div>
<div class="a" style="left:30px;top:931px;width:939px;height:1px;background:#dadada"></div>
<svg class="a" style="left:48px;top:913px" width="921" height="37" viewBox="48 913 921 37">
 <!-- add page -->
 <path d="M52.5 915.5 H57.5 L60.5 918.5 V926.5 H52.5 Z" fill="#fff" stroke="#000"/>
 <path d="M56.5 915.5 V918.5 H60.5" fill="none" stroke="#000"/>
 <path d="M56.5 919.5 V925 M53.8 922.5 H59.2" stroke="#000" stroke-width="1.2"/>
 <path d="M70.5 915 V926" stroke="#aaa"/><path d="M77.5 915 L72 920.5 L77.5 926 Z" fill="#aaa"/>
 <path d="M94.5 915 L89 920.5 L94.5 926 Z" fill="#aaa"/>
 <path d="M161 915 L166.5 920.5 L161 926 Z" fill="#000"/>
 <path d="M176 915 L181.5 920.5 L176 926 Z" fill="#000"/><path d="M182.5 915 V926" stroke="#000"/>
 <path d="M192.5 915.5 H197.5 L200.5 918.5 V926.5 H192.5 Z" fill="#fff" stroke="#000"/>
 <path d="M196.5 915.5 V918.5 H200.5" fill="none" stroke="#000"/>
 <path d="M196.5 919.5 V925 M193.8 922.5 H199.2" stroke="#000" stroke-width="1.2"/>
 <path d="M206.5 914 V930" stroke="#c8c8c8"/>
 <!-- tabs -->
 <path d="M207 914 H272.5 L279 920 V931 H207 Z" fill="#fff"/>
 <path d="M279 931 V920 L272.5 914 H338.5 L345 920 V931 Z" fill="#dcdcdc" stroke="#c0c0c0" stroke-width="1"/>
 <path d="M506.5 916 V917 M506.5 920 V921 M506.5 924 V925" stroke="#bbb" stroke-width="1.5"/>
 <path d="M521.5 918 L517.5 922 L521.5 926" fill="none" stroke="#444" stroke-width="2"/>
 <path d="M939.5 918 L943.5 922 L939.5 926" fill="none" stroke="#444" stroke-width="2"/>
 <circle cx="958" cy="920.5" r="4.5" fill="none" stroke="#3a3e54" stroke-width="1.2"/>
 <path d="M961 924 L966 929" stroke="#3a3e54" stroke-width="1.8"/>
 <circle cx="958" cy="920.5" r="1.5" fill="none" stroke="#3a3e54" stroke-width=".8"/>
 <!-- doc palette row -->

 <path d="M54.5 946.5 L62 939" stroke="#4a7a7a" stroke-width="2.6" stroke-linecap="round"/><path d="M61 937 L65 941" stroke="#2a2e44" stroke-width="2.5"/><circle cx="65" cy="936.5" r="2" fill="#2a2e44"/>
 <path d="M77 937 L73 940.5 L77 944" fill="none" stroke="#c8c8d0" stroke-width="1.3"/>
 <rect x="84.5" y="932.5" width="17" height="17" fill="#fff" stroke="#707070"/>
 <path d="M85 933 L101 949 M101 933 L85 949" stroke="#000" stroke-width=".8"/>
 <rect x="101.5" y="932.5" width="17" height="17" fill="#fff" stroke="#a8a8a8"/>
 <rect x="118.5" y="932.5" width="17" height="17" fill="#000" stroke="#606060"/>
 <rect x="135.5" y="932.5" width="17" height="17" fill="#00ff00" stroke="#606060"/>
 <path d="M931.5 936 L935.5 940.5 L931.5 945" fill="none" stroke="#c8c8d0" stroke-width="1.3"/>
 <path d="M950 937.5 L953 940.5 L950 943.5 M954 937.5 L957 940.5 L954 943.5" fill="none" stroke="#a8a8c8" stroke-width="1"/>
</svg>
<svg class="a" style="left:30px;top:931px" width="20" height="19" viewBox="30 931 20 19"><path d="M35 935.5 V936.5 M35 939.5 V940.5 M35 943.5 V944.5" stroke="#b8b8b8" stroke-width="1.3"/><path d="M42 936 L47 940.5 L42 945 Z" fill="#000"/></svg>
<div class="t" style="left:48px;top:931px;width:921px;height:19px"></div>
<div class="t" style="left:115px;top:915px">1 z 2</div>
<div class="t" style="left:221px;top:914px">Strona 1</div>
<div class="t" style="left:286px;top:914px">Strona 2</div>
<!-- docker -->
<div class="a" style="left:0;top:112px;width:1280px;height:1px;background:#e2e2e2"></div>
<div class="a" style="left:969px;top:113px;width:5px;height:837px;background:#fff"></div>
<div class="a" style="left:971px;top:115px;width:1px;height:835px;background:#d4d4d4"></div>
<div class="a" style="left:974px;top:113px;width:288px;height:19px;background:#efefef"></div>
<div class="a" style="left:974px;top:132px;width:268px;height:1px;background:#b4b4b4"></div>
<div class="t" style="left:976px;top:116px">Menedżer obiektów</div>
<div class="a" style="left:974px;top:133px;width:268px;height:817px;background:#f7f7f7"></div>
<div class="a" style="left:1242px;top:132px;width:20px;height:818px;background:#dcdcdc"></div>
<div class="a" style="left:978px;top:170px;width:257px;height:745px;background:#fff;border:1px solid #6e6e6e"></div>
<div class="a" style="left:1242px;top:282px;width:19px;height:1px;background:#ececec"></div><div class="a" style="left:1242px;top:283px;width:19px;height:147px;background:#bfbfbf"></div><div class="a" style="left:1242px;top:430px;width:19px;height:1px;background:#ececec"></div>
<div class="a" style="left:1242px;top:431px;width:20px;height:141px;background:#dcdcdc"></div>
<div class="a" style="left:1242px;top:572px;width:20px;height:378px;background:#efefef"></div>
<svg class="a" style="left:972px;top:112px" width="290" height="838" viewBox="972 112 290 838">
 <path d="M1235 120 L1238 123 L1235 126 Z M1239 120 L1242 123 L1239 126 Z" fill="#a8a8b8"/>
 <path d="M1248 119 L1254 125 M1254 119 L1248 125" stroke="#a8a8b8" stroke-width="1.3"/>
 <rect x="978.5" y="141.5" width="22" height="22" fill="#fff" stroke="#a9a9a9"/>
 <rect x="1006.5" y="141.5" width="22" height="22" fill="#fff" stroke="#a9a9a9"/>
 <path d="M988 146 L997 146 L994 151 L985 151 Z" fill="#c8cce0" stroke="#7a80a0" stroke-width=".8"/>
 <path d="M981 147 L982.5 149 L985 145.5" fill="none" stroke="#3a9a2a" stroke-width="1.2"/>
 <path d="M1013 146 L1022 146 L1019 151 L1010 151 Z" fill="#d8dcec" stroke="#7a80a0" stroke-width=".8"/>
 <path d="M1041 146 L1050 146 L1047 151 L1038 151 Z" fill="#d8dcec" stroke="#7a80a0" stroke-width=".8"/>
 <path d="M988 151 L997 151 L994 156 L985 156 Z" fill="#c8cce0" stroke="#7a80a0" stroke-width=".8"/>
 <path d="M981 152 L982.5 154 L985 150.5" fill="none" stroke="#3a9a2a" stroke-width="1.2"/>
 <path d="M1013 151 L1022 151 L1019 156 L1010 156 Z" fill="#d8dcec" stroke="#7a80a0" stroke-width=".8"/>
 <path d="M1041 151 L1050 151 L1047 156 L1038 156 Z" fill="#d8dcec" stroke="#7a80a0" stroke-width=".8"/>
 <path d="M988 156 L997 156 L994 161 L985 161 Z" fill="#c8cce0" stroke="#7a80a0" stroke-width=".8"/>
 <path d="M981 157 L982.5 159 L985 155.5" fill="none" stroke="#3a9a2a" stroke-width="1.2"/>
 <path d="M1013 156 L1022 156 L1019 161 L1010 161 Z" fill="#d8dcec" stroke="#7a80a0" stroke-width=".8"/>
 <path d="M1041 156 L1050 156 L1047 161 L1038 161 Z" fill="#d8dcec" stroke="#7a80a0" stroke-width=".8"/>
 <path d="M1018 154 L1024 148 L1027 151 L1021 157 Z" fill="#2a2e44"/>
 <path d="M1036 146 H1037 M1036 151 H1038 M1036 156 H1038" stroke="#6a7090" stroke-width="1.5"/>
 <ellipse cx="1047" cy="148" rx="4" ry="2.5" fill="#555"/>
 <path d="M1050 165 L1055 160 L1055 165 Z" fill="#000"/>
 <path d="M1222 141 L1226 145 L1222 149 Z" fill="#000"/>
 <rect x="979" y="171" width="255" height="18" fill="#d7e4f2"/><rect x="979" y="188" width="255" height="1" fill="#b6c2ce"/>
 <rect x="986.5" y="175.5" width="8" height="8" fill="#fff" stroke="#2a2e44"/><path d="M988 179.5 H993" stroke="#2a2e44"/><path d="M1003.5 186.5 V175 L1006 172.5 H1013.5 V186.5 Z" fill="#ddeee8" stroke="#6a6e88"/><path d="M1004 187 H1014.5 V173" fill="none" stroke="#2a2e44"/>
 <rect x="979" y="207" width="255" height="1" fill="#d8d8d8"/>
 <path d="M1022 197 L1025 193.5 H1031 L1034 197 L1031 200.5 H1025 Z" fill="#6a6a7a"/><path d="M1023.5 198 Q1028 201 1032.5 198" fill="none" stroke="#fff" stroke-width="1"/><rect x="1026" y="195" width="2" height="2" fill="#e8e8f0"/><rect x="1028" y="195" width="2.5" height="3" fill="#222"/><rect x="1037.5" y="197.5" width="12" height="5" fill="#eee" stroke="#9a9aa8"/><circle cx="1043" cy="196.5" r="4.3" fill="none" stroke="#e01010" stroke-width="1.6"/><path d="M1040 199.5 L1046 193.5" stroke="#e01010" stroke-width="1.6"/><path d="M1056 201 L1063 194 L1065.5 196.5 L1058.5 203.5 Z" fill="#5a5a6e"/><path d="M1056 201 L1053.5 203.8 L1058.5 203.5 Z" fill="#e8e8ee" stroke="#5a5a6e" stroke-width=".6"/><rect x="1066" y="191" width="15" height="12" fill="#0000ff"/>
 <rect x="979" y="225" width="255" height="1" fill="#d8d8d8"/>
 <rect x="1005.5" y="211.5" width="8" height="8" fill="#fff" stroke="#2a2e44"/><path d="M1007 215.5 H1012 M1009.5 213 V218" stroke="#2a2e44"/><path d="M1022 215 L1025 211.5 H1031 L1034 215 L1031 218.5 H1025 Z" fill="#6a6a7a"/><path d="M1023.5 216 Q1028 219 1032.5 216" fill="none" stroke="#fff" stroke-width="1"/><rect x="1026" y="213" width="2" height="2" fill="#e8e8f0"/><rect x="1028" y="213" width="2.5" height="3" fill="#222"/><rect x="1040.5" y="210.5" width="6" height="5" fill="#fff" stroke="#9a9aa8"/><rect x="1037.5" y="215.5" width="12" height="5" fill="#eee" stroke="#9a9aa8"/><rect x="1038" y="215" width="11" height="1.5" fill="#3a3e54"/><path d="M1056 219 L1063 212 L1065.5 214.5 L1058.5 221.5 Z" fill="#5a5a6e"/><path d="M1056 219 L1053.5 221.8 L1058.5 221.5 Z" fill="#e8e8ee" stroke="#5a5a6e" stroke-width=".6"/><rect x="1066" y="209" width="15" height="12" fill="#1a1a1a"/>
 <rect x="979" y="226" width="255" height="16" fill="#d7e4f2"/><rect x="979" y="242" width="255" height="1" fill="#b6c2ce"/>
 <rect x="986.5" y="229.5" width="8" height="8" fill="#fff" stroke="#2a2e44"/><path d="M988 233.5 H993" stroke="#2a2e44"/><path d="M1003.5 240.5 V229 L1006 226.5 H1013.5 V240.5 Z" fill="#ddeee8" stroke="#6a6e88"/><path d="M1004 241 H1014.5 V227" fill="none" stroke="#2a2e44"/>
 <rect x="979" y="261" width="255" height="1" fill="#d8d8d8"/>
 <path d="M1022 251 L1025 247.5 H1031 L1034 251 L1031 254.5 H1025 Z" fill="#6a6a7a"/><path d="M1023.5 252 Q1028 255 1032.5 252" fill="none" stroke="#fff" stroke-width="1"/><rect x="1026" y="249" width="2" height="2" fill="#e8e8f0"/><rect x="1028" y="249" width="2.5" height="3" fill="#222"/><rect x="1037.5" y="251.5" width="12" height="5" fill="#eee" stroke="#9a9aa8"/><circle cx="1043" cy="250.5" r="4.3" fill="none" stroke="#e01010" stroke-width="1.6"/><path d="M1040 253.5 L1046 247.5" stroke="#e01010" stroke-width="1.6"/><path d="M1056 255 L1063 248 L1065.5 250.5 L1058.5 257.5 Z" fill="#5a5a6e"/><path d="M1056 255 L1053.5 257.8 L1058.5 257.5 Z" fill="#e8e8ee" stroke="#5a5a6e" stroke-width=".6"/><rect x="1066" y="245" width="15" height="12" fill="#0000ff"/>
 <rect x="979" y="279" width="255" height="1" fill="#d8d8d8"/>
 <rect x="1005.5" y="265.5" width="8" height="8" fill="#fff" stroke="#2a2e44"/><path d="M1007 269.5 H1012 M1009.5 267 V272" stroke="#2a2e44"/><path d="M1022 269 L1025 265.5 H1031 L1034 269 L1031 272.5 H1025 Z" fill="#6a6a7a"/><path d="M1023.5 270 Q1028 273 1032.5 270" fill="none" stroke="#fff" stroke-width="1"/><rect x="1026" y="267" width="2" height="2" fill="#e8e8f0"/><rect x="1028" y="267" width="2.5" height="3" fill="#222"/><rect x="1040.5" y="264.5" width="6" height="5" fill="#fff" stroke="#9a9aa8"/><rect x="1037.5" y="269.5" width="12" height="5" fill="#eee" stroke="#9a9aa8"/><rect x="1038" y="269" width="11" height="1.5" fill="#3a3e54"/><path d="M1056 273 L1063 266 L1065.5 268.5 L1058.5 275.5 Z" fill="#5a5a6e"/><path d="M1056 273 L1053.5 275.8 L1058.5 275.5 Z" fill="#e8e8ee" stroke="#5a5a6e" stroke-width=".6"/><rect x="1066" y="263" width="15" height="12" fill="#1a1a1a"/>
 <rect x="979" y="280" width="255" height="16" fill="#d7e4f2"/><rect x="979" y="296" width="255" height="1" fill="#b6c2ce"/>
 <rect x="986.5" y="283.5" width="8" height="8" fill="#fff" stroke="#2a2e44"/><path d="M988 287.5 H993" stroke="#2a2e44"/><path d="M1003.5 294.5 V283 L1006 280.5 H1013.5 V294.5 Z" fill="#ddeee8" stroke="#6a6e88"/><path d="M1004 295 H1014.5 V281" fill="none" stroke="#2a2e44"/>
 <rect x="979" y="315" width="255" height="1" fill="#d8d8d8"/>
 <rect x="1005.5" y="301.5" width="8" height="8" fill="#fff" stroke="#2a2e44"/><path d="M1007 305.5 H1012 M1009.5 303 V308" stroke="#2a2e44"/><path d="M1022 305 L1025 301.5 H1031 L1034 305 L1031 308.5 H1025 Z" fill="#6a6a7a"/><path d="M1023.5 306 Q1028 309 1032.5 306" fill="none" stroke="#fff" stroke-width="1"/><rect x="1026" y="303" width="2" height="2" fill="#e8e8f0"/><rect x="1028" y="303" width="2.5" height="3" fill="#222"/><rect x="1037.5" y="305.5" width="12" height="5" fill="#eee" stroke="#9a9aa8"/><circle cx="1043" cy="304.5" r="4.3" fill="none" stroke="#e01010" stroke-width="1.6"/><path d="M1040 307.5 L1046 301.5" stroke="#e01010" stroke-width="1.6"/><path d="M1056 309 L1063 302 L1065.5 304.5 L1058.5 311.5 Z" fill="#5a5a6e"/><path d="M1056 309 L1053.5 311.8 L1058.5 311.5 Z" fill="#e8e8ee" stroke="#5a5a6e" stroke-width=".6"/><rect x="1066" y="299" width="15" height="12" fill="#0000ff"/>
 <rect x="979" y="333" width="255" height="1" fill="#d8d8d8"/>
 <path d="M1022 323 L1025 319.5 H1031 L1034 323 L1031 326.5 H1025 Z" fill="#6a6a7a"/><path d="M1023.5 324 Q1028 327 1032.5 324" fill="none" stroke="#fff" stroke-width="1"/><rect x="1026" y="321" width="2" height="2" fill="#e8e8f0"/><rect x="1028" y="321" width="2.5" height="3" fill="#222"/><rect x="1037.5" y="323.5" width="12" height="5" fill="#eee" stroke="#9a9aa8"/><circle cx="1043" cy="322.5" r="4.3" fill="none" stroke="#e01010" stroke-width="1.6"/><path d="M1040 325.5 L1046 319.5" stroke="#e01010" stroke-width="1.6"/><path d="M1056 327 L1063 320 L1065.5 322.5 L1058.5 329.5 Z" fill="#5a5a6e"/><path d="M1056 327 L1053.5 329.8 L1058.5 329.5 Z" fill="#e8e8ee" stroke="#5a5a6e" stroke-width=".6"/><rect x="1066" y="317" width="15" height="12" fill="#1a1a1a"/>
 <rect x="979" y="351" width="255" height="1" fill="#d8d8d8"/>
 <ellipse cx="1028" cy="342" rx="5.5" ry="3" fill="#a0a0a8"/><ellipse cx="1028" cy="341" rx="5" ry="2.5" fill="#d0d0d8"/><rect x="1037.5" y="341.5" width="12" height="5" fill="#eee" stroke="#9a9aa8"/><circle cx="1043" cy="340.5" r="4.3" fill="none" stroke="#e01010" stroke-width="1.6"/><path d="M1040 343.5 L1046 337.5" stroke="#e01010" stroke-width="1.6"/><rect x="1054.5" y="337" width="9" height="9" rx="4.5" fill="#999"/><circle cx="1059" cy="341.5" r="4.3" fill="none" stroke="#e01010" stroke-width="1.6"/><path d="M1056 344.5 L1062 338.5" stroke="#e01010" stroke-width="1.6"/><rect x="1066" y="335" width="15" height="12" fill="#c0c0c0"/>
 <path d="M981.5 923.5 H987.5 L993.5 929.5 H987.5 Z" fill="#e4e6f2" stroke="#6a7090" stroke-width=".9"/>
 <path d="M981.5 927.5 H987.5 L993.5 933.5 H987.5 Z" fill="#e4e6f2" stroke="#6a7090" stroke-width=".9"/>
 <path d="M981.5 931.5 H987.5 L993.5 937.5 H987.5 Z" fill="#e4e6f2" stroke="#6a7090" stroke-width=".9"/>
 <circle cx="992.5" cy="927" r="3.6" fill="#22962a"/>
 <text x="1009" y="929" font-family="Liberation Sans" font-size="6" font-weight="bold" fill="#5a6a8a">1</text>
 <text x="1009" y="934" font-family="Liberation Sans" font-size="6" font-weight="bold" fill="#5a6a8a">2</text>
 <text x="1009" y="939" font-family="Liberation Sans" font-size="6" font-weight="bold" fill="#5a6a8a">3</text>
 <path d="M1016 927.5 L1019 923.5 H1024.5 L1021.5 927.5 Z" fill="#e4e6f2" stroke="#6a7090" stroke-width=".8"/>
 <path d="M1016 931.5 L1019 927.5 H1024.5 L1021.5 931.5 Z" fill="#e4e6f2" stroke="#6a7090" stroke-width=".8"/>
 <path d="M1016 935.5 L1019 931.5 H1024.5 L1021.5 935.5 Z" fill="#e4e6f2" stroke="#6a7090" stroke-width=".8"/>
 <path d="M1017 932 L1019 928 H1023 L1021 932 Z" fill="#f07a18"/>
 <circle cx="1021.5" cy="927" r="3.6" fill="#22962a"/>
 <text x="1037" y="929" font-family="Liberation Sans" font-size="6" font-weight="bold" fill="#4a5a7a">1</text>
 <text x="1037" y="934" font-family="Liberation Sans" font-size="6" font-weight="bold" fill="#4a5a7a">3</text>
 <text x="1037" y="939" font-family="Liberation Sans" font-size="6" font-weight="bold" fill="#4a5a7a">5</text>
 <path d="M1044 927.5 L1047 923.5 H1052.5 L1049.5 927.5 Z" fill="#e4e6f2" stroke="#6a7090" stroke-width=".8"/>
 <path d="M1044 931.5 L1047 927.5 H1052.5 L1049.5 931.5 Z" fill="#e4e6f2" stroke="#6a7090" stroke-width=".8"/>
 <path d="M1044 935.5 L1047 931.5 H1052.5 L1049.5 935.5 Z" fill="#e4e6f2" stroke="#6a7090" stroke-width=".8"/>
 <path d="M1045 932 L1047 928 H1051 L1049 932 Z" fill="#f07a18"/>
 <circle cx="1049.5" cy="927" r="3.6" fill="#22962a"/>
 <text x="1065" y="929" font-family="Liberation Sans" font-size="6" fill="#c8c8c8">2</text>
 <text x="1065" y="934" font-family="Liberation Sans" font-size="6" fill="#c8c8c8">4</text>
 <text x="1065" y="939" font-family="Liberation Sans" font-size="6" fill="#c8c8c8">6</text>
 <path d="M1072 927.5 L1075 923.5 H1080.5 L1077.5 927.5 Z" fill="#d8d8d8" stroke="#c8c8c8" stroke-width=".8"/>
 <path d="M1072 931.5 L1075 927.5 H1080.5 L1077.5 931.5 Z" fill="#d8d8d8" stroke="#c8c8c8" stroke-width=".8"/>
 <path d="M1072 935.5 L1075 931.5 H1080.5 L1077.5 935.5 Z" fill="#d8d8d8" stroke="#c8c8c8" stroke-width=".8"/>
 <path d="M1212.5 928 H1221.5 V938.5 H1212.5 Z M1211 926.5 H1223 M1215 925 H1219" fill="none" stroke="#cfcfcf" stroke-width="1.2"/>
 <rect x="1249" y="139" width="10" height="12" fill="#8a8ea8"/><rect x="1251" y="141.5" width="6" height="7" fill="#c4c4e4"/>
 <path d="M1252 142.5 h1 M1255 142.5 h1 M1252 145 h1 M1255 145 h1 M1252 147.5 h1 M1255 147.5 h1" stroke="#fff" stroke-width="1"/>
 <path d="M1249 136.5 L1250.5 141 L1247.5 145 L1245 141 Z" fill="#fff" stroke="#8a8ea8" stroke-width=".8"/>
 <path d="M1246 143 H1250 L1248 145.5 Z" fill="#f0a020"/><circle cx="1244.5" cy="143.5" r=".9" fill="#000"/><circle cx="1251.5" cy="138.5" r=".9" fill="#000"/>
 <path d="M1245.5 290 V302" stroke="#fff" stroke-width="1" stroke-dasharray="1 1"/>
 <path d="M1251 291 V302 M1251 293 H1256 M1251 296 H1256 M1251 301 H1256" stroke="#222" stroke-width="1" stroke-dasharray="1 1"/>
 <circle cx="1245.5" cy="289.5" r="1.8" fill="#5a5e7a"/><path d="M1247 289.5 H1249" stroke="#5a5e7a"/>
 <rect x="1249.5" y="287.5" width="3" height="4" fill="#5a5e7a"/>
 <circle cx="1256.5" cy="291.5" r="1.6" fill="#5a5e7a"/><rect x="1254.5" y="294" width="4.5" height="3.5" fill="#5a5e7a"/><circle cx="1256.5" cy="300.5" r="1.6" fill="#5a5e7a"/>
 <path d="M1245.5 449.5 L1249 436.5 H1252 L1256 449.5 H1253 L1252 446 H1249 L1248 449.5 Z M1249.8 443.5 H1251.3 L1250.5 440.5 Z" fill="#f4f4fa" fill-rule="evenodd" stroke="#4a4e6a" stroke-width="1"/>
 <path d="M1244 437.5 H1248 M1255 437.5 H1259" stroke="#2a2e44" stroke-width="1.2"/><path d="M1244 437.5 L1246 435.5 V439.5 Z M1259 437.5 L1257 435.5 V439.5 Z" fill="#2a2e44"/>
 <circle cx="1251" cy="599" r="8" fill="#f0f0f0" stroke="#bdbdbd"/><path d="M1251 594 V604 M1246 599 H1256" stroke="#bdbdbd" stroke-width="1.5"/>
</svg>
<div class="t" style="left:1071px;top:138px">Strona 1</div>
<div class="t" style="left:1071px;top:153px">Warstwa 1</div>
<div class="t" style="left:1020px;top:173px;font-weight:bold">Strona 1</div>
<div class="t" style="left:1088px;top:191px;width:146px;overflow:hidden;font-style:italic;color:#000">Prowadnice</div>
<div class="t" style="left:1088px;top:209px;width:146px;overflow:hidden;font-weight:bold;color:#ff0000">Warstwa 1</div>
<div class="t" style="left:1020px;top:227px;font-weight:bold">Strona 2</div>
<div class="t" style="left:1088px;top:245px;width:146px;overflow:hidden;font-style:italic;color:#000">Prowadnice</div>
<div class="t" style="left:1088px;top:263px;width:146px;overflow:hidden;color:#000">Warstwa 1</div>
<div class="t" style="left:1020px;top:281px;font-weight:bold">Strona główna</div>
<div class="t" style="left:1088px;top:299px;width:146px;overflow:hidden;font-style:italic;color:#2f5ab4">Prowadnice (wszystkie strony)</div>
<div class="t" style="left:1088px;top:317px;width:146px;overflow:hidden;font-style:italic;color:#2f5ab4">Pulpit</div>
<div class="t" style="left:1088px;top:335px;width:146px;overflow:hidden;font-style:italic;color:#2f5ab4">Siatka dokumentu</div>
<div class="t" style="left:1244px;top:156px;width:14px;writing-mode:vertical-rl">Właściwości obiektu</div>
<div class="t" style="left:1244px;top:306px;width:14px;writing-mode:vertical-rl">Menedżer obiektów</div>
<div class="t" style="left:1244px;top:454px;width:14px;writing-mode:vertical-rl">Właściwości tekstu</div>
<!-- palette -->
<div class="a" style="left:1262px;top:112px;width:18px;height:838px;background:#f7f7f7"></div>
<svg class="a" style="left:1262px;top:112px" width="18" height="838" viewBox="1262 112 18 838">
 <path d="M1265.5 118 H1267 M1269.5 118 H1271 M1273.5 118 H1275" stroke="#b8b8b8" stroke-width="1.3"/>
 <path d="M1268 123 L1273.2 127.5 L1268 132 Z" fill="#000"/>
 <path d="M1265.5 148.5 L1272 142" stroke="#c4c4c4" stroke-width="2.4"/><path d="M1270 141 L1274 145" stroke="#bcbcbc" stroke-width="2.5"/><circle cx="1275" cy="138.5" r="2" fill="#c0c0c0"/>
 <path d="M1266 160 L1270 155 L1274 160" fill="none" stroke="#c8d0e0" stroke-width="1.5"/>
 <rect x="1262" y="167" width="18" height="743" fill="#9a9a9a"/>
 <rect x="1263" y="168" width="16" height="16" fill="#fff"/>
 <path d="M1264 169 L1278 183 M1278 169 L1264 183" stroke="#000" stroke-width=".9"/>
 <rect x="1263" y="185" width="16" height="16" fill="#000000"/>
 <rect x="1263" y="202" width="16" height="16" fill="#1a1a1a"/>
 <rect x="1263" y="219" width="16" height="16" fill="#333333"/>
 <rect x="1263" y="236" width="16" height="16" fill="#4d4d4d"/>
 <rect x="1263" y="253" width="16" height="16" fill="#666666"/>
 <rect x="1263" y="270" width="16" height="16" fill="#808080"/>
 <rect x="1263" y="287" width="16" height="16" fill="#999999"/>
 <rect x="1263" y="304" width="16" height="16" fill="#b3b3b3"/>
 <rect x="1263" y="321" width="16" height="16" fill="#cccccc"/>
 <rect x="1263" y="338" width="16" height="16" fill="#e6e6e6"/>
 <rect x="1263" y="355" width="16" height="16" fill="#ffffff"/>
 <rect x="1263" y="372" width="16" height="16" fill="#0000ff"/>
 <rect x="1263" y="389" width="16" height="16" fill="#00ffff"/>
 <rect x="1263" y="406" width="16" height="16" fill="#00ff00"/>
 <rect x="1263" y="423" width="16" height="16" fill="#ffff00"/>
 <rect x="1263" y="440" width="16" height="16" fill="#ff0000"/>
 <rect x="1263" y="457" width="16" height="16" fill="#ff00ff"/>
 <rect x="1263" y="474" width="16" height="16" fill="#9900cc"/>
 <rect x="1263" y="491" width="16" height="16" fill="#ff6600"/>
 <rect x="1263" y="508" width="16" height="16" fill="#ff99cc"/>
 <rect x="1263" y="525" width="16" height="16" fill="#663333"/>
 <rect x="1263" y="542" width="16" height="16" fill="#ccccff"/>
 <rect x="1263" y="559" width="16" height="16" fill="#9999ff"/>
 <rect x="1263" y="576" width="16" height="16" fill="#6699ff"/>
 <rect x="1263" y="593" width="16" height="16" fill="#6666ff"/>
 <rect x="1263" y="610" width="16" height="16" fill="#6666cc"/>
 <rect x="1263" y="627" width="16" height="16" fill="#003399"/>
 <rect x="1263" y="644" width="16" height="16" fill="#000066"/>
 <rect x="1263" y="661" width="16" height="16" fill="#336699"/>
 <rect x="1263" y="678" width="16" height="16" fill="#00ccff"/>
 <rect x="1263" y="695" width="16" height="16" fill="#99ffff"/>
 <rect x="1263" y="712" width="16" height="16" fill="#99cccc"/>
 <rect x="1263" y="729" width="16" height="16" fill="#669999"/>
 <rect x="1263" y="746" width="16" height="16" fill="#336666"/>
 <rect x="1263" y="763" width="16" height="16" fill="#003333"/>
 <rect x="1263" y="780" width="16" height="16" fill="#006633"/>
 <rect x="1263" y="797" width="16" height="16" fill="#009933"/>
 <rect x="1263" y="814" width="16" height="16" fill="#339966"/>
 <rect x="1263" y="831" width="16" height="16" fill="#33cc66"/>
 <rect x="1263" y="848" width="16" height="16" fill="#33cc33"/>
 <rect x="1263" y="865" width="16" height="16" fill="#66ffcc"/>
 <rect x="1263" y="882" width="16" height="16" fill="#33cc99"/>
 <rect x="1263" y="899" width="16" height="10" fill="#99cc99"/>
 <path d="M1266 914 L1270.5 918.5 L1275 914" fill="none" stroke="#b8b8c8" stroke-width="1.4"/>
 <path d="M1265 931 L1268.5 934.5 L1265 938 M1270 931 L1273.5 934.5 L1270 938" fill="none" stroke="#b8b8c8" stroke-width="1.2"/>
</svg>
<!-- status bar -->
<div class="a" style="left:0;top:950px;width:1280px;height:34px;background:#f7f7f7;border-top:1px solid #dcdcdc"></div>
<div class="t" style="left:5px;top:961px">(</div><div class="t" style="left:12px;top:961px">363</div><div class="t" style="left:38px;top:961px">;</div><div class="t" style="left:45px;top:961px">150</div><div class="t" style="left:74px;top:961px">)</div>
<svg class="a" style="left:0;top:950px" width="1280" height="34" viewBox="0 950 1280 34">
 <rect x="88.5" y="960.5" width="13" height="13" fill="#fff" stroke="#000"/>
 <path d="M92 963 L98 967 L92 971 Z" fill="#000"/>
 <rect x="826.5" y="960.5" width="14" height="12" rx="1" fill="#fff" stroke="#6a6e90"/>
 <rect x="828" y="962" width="11" height="3" fill="#d89a9a"/><rect x="828" y="965" width="11" height="3" fill="#6aa86a"/><rect x="828" y="968" width="11" height="3" fill="#8ab0e0"/>
 <circle cx="833.5" cy="966.5" r="2.6" fill="#fff" stroke="#2a2e44" stroke-width="1.2"/>
 <path d="M829 974.5 H838" stroke="#6a6e90" stroke-width="1.2"/>
 <path d="M861.5 961 L869 968 L862 975 L855.5 968.5 Z" fill="#fff" stroke="#5a5e7a" stroke-width="1.2"/>
 <path d="M856.5 969 H867.5 L862 974.5 Z" fill="#f08a10"/>
 <path d="M861 961 L863 965.5 M860 960 L863 960" stroke="#5a5e7a" stroke-width="1"/>
 <path d="M867 966 Q869.5 966 869.5 969 V973" fill="none" stroke="#f08a10" stroke-width="1.5"/>
 <rect x="876.5" y="958.5" width="17" height="17" fill="#fff" stroke="#a0a0a0"/>
 <path d="M877 959 L893 975 M893 959 L877 975" stroke="#000" stroke-width="1"/>
 <rect x="1058" y="955" width="1" height="25" fill="#dcdcdc"/>
 <path d="M1071 960 Q1075 965 1074 971 H1068 Q1067 965 1071 960 Z" fill="#fff" stroke="#3a3e54" stroke-width="1"/>
 <rect x="1067" y="973" width="8" height="2" fill="#2a2e44"/>
 <rect x="1085.5" y="958.5" width="16" height="16" fill="#000" stroke="#707070"/>
</svg>
<div class="t" style="left:896px;top:961px">Brak</div>
<div class="t" style="left:1106px;top:961px;letter-spacing:-0.55px">R:0 G:0 B:0 (#000000)</div>
<div class="t" style="left:1222px;top:961px">1 piks.</div>
<!-- taskbar -->
<div class="a" style="left:0;top:984px;width:1280px;height:40px;background:#7c9cb8"></div>
<div class="a" style="left:60px;top:985px;width:58px;height:38px;background:#9bb4c8;border:1px solid #b4c8d8"></div>
<div class="a" style="left:245px;top:985px;width:59px;height:38px;background:#8eaac0;border:1px solid #a8bed0"></div>
<div class="a" style="left:307px;top:985px;width:59px;height:38px;background:#8eaac0;border:1px solid #a8bed0"></div>
<div class="a" style="left:369px;top:985px;width:59px;height:38px;background:#9bb4c8;border:1px solid #c8d8e4"></div>
<svg class="a" style="left:0;top:984px" width="1280" height="40" viewBox="0 984 1280 40">
 <defs>
  <radialGradient id="orb" cx="0.5" cy="0.35" r="0.7"><stop offset="0" stop-color="#8ac8d0"/><stop offset="0.6" stop-color="#2a6a78"/><stop offset="1" stop-color="#1a4a58"/></radialGradient>
  <radialGradient id="ffg" cx="0.6" cy="0.4" r="0.6"><stop offset="0" stop-color="#5a9ae0"/><stop offset="1" stop-color="#1a3a8a"/></radialGradient>
 </defs>
 <circle cx="27" cy="1004" r="18" fill="url(#orb)" stroke="#a8d0d8" stroke-width="1"/>
 <path d="M18 1002 Q16 994 22 992 Q27 989 32 992 Q38 994 36 1002 Z" fill="#f05a28"/>
 <path d="M27 990 Q32 990 34 993 Q38 996 36 1002 H27 Z" fill="#7ac040"/>
 <path d="M18 1003 H26.5 V1013 Q20 1012 18 1003 Z" fill="#3aa0e8"/>
 <path d="M27.5 1003 H36 Q35 1011 27.5 1013 Z" fill="#f8c820"/>
 <!-- firefox -->
 <circle cx="89" cy="1004" r="14" fill="url(#ffg)"/>
 <path d="M76 996 Q80 987 90 989 Q84 991 85 995 Q79 999 83 1006 Q87 1012 95 1010 Q100 1007 102 1001 Q104 1012 94 1017 Q82 1021 76 1012 Q73 1004 76 996 Z" fill="#e86a1a"/>
 <path d="M90 989 Q100 990 102 1000 Q98 994 92 995 Z" fill="#f8a030"/>
 <!-- ie -->
 <circle cx="151" cy="1004" r="12" fill="#3ab0f0"/>
 <circle cx="151" cy="1004" r="7" fill="#fff" opacity=".85"/>
 <rect x="144" y="1002" width="14" height="3.5" fill="#2a90d8"/>
 <path d="M144 1006 Q148 1011 157 1008 L160 1009 Q152 1016 143 1008 Z" fill="#2a90d8"/>
 <path d="M137 1017 Q133 1010 145 998 Q158 987 166 990 Q169 994 160 1003" fill="none" stroke="#f0c020" stroke-width="2.5"/>
 <!-- chrome -->
 <circle cx="213" cy="1004" r="14.5" fill="#2fa84f"/>
 <path d="M225.6 996.75 A14.5 14.5 0 0 1 213 1018.5 L220 1007 Z" fill="#f4c20d"/>
 <path d="M213 989.5 A14.5 14.5 0 0 1 225.6 996.75 H213 Q206 997 204 1002 L200.4 996.75 A14.5 14.5 0 0 1 213 989.5 Z" fill="#db4437"/>
 <circle cx="213" cy="1004" r="7" fill="#fff"/><circle cx="213" cy="1004" r="5.3" fill="#4285f4"/>
 <!-- ps -->
 <rect x="261.5" y="989.5" width="27" height="25" fill="#0c1d5a" stroke="#5aa0f0" stroke-width="1.5"/>
 <!-- explorer -->
 <path d="M322 993 H332 L334 995 H350 V1003 H322 Z" fill="#e8b848"/>
 <rect x="324" y="992" width="3" height="2" fill="#30a030"/><rect x="330" y="993" width="3" height="2" fill="#e03030"/><rect x="341" y="995" width="3" height="2" fill="#3070e0"/>
 <path d="M321 999 H352 L350 1019 H323 Z" fill="#f4d888"/>
 <path d="M329 1012 H345 V1019 H341 V1015 H333 V1019 H329 Z" fill="#58a8e0"/>
 <!-- corel -->
 <rect x="383" y="988" width="32" height="32" fill="#5aaa3a"/>
 <path d="M385 990 L392 990 L404 1006 L409 1016 L399 1011 L385 998 Z" fill="#fff"/>
 <path d="M386.5 991 L395 999" stroke="#5aaa3a" stroke-width="2"/>
 <path d="M400 990 Q412 990 413 1002 L406 1004 Q406 994 400 990 Z" fill="#8ad06a"/>
 <!-- tray -->
 <path d="M1124 1009 L1128 1005 L1132 1009 Z" fill="#fff"/>
 <path d="M1144.5 999 L1151.5 998 V1004.5 H1144.5 Z M1152.5 997.8 L1160 996.8 V1004.5 H1152.5 Z M1144.5 1005.5 H1151.5 V1012 L1144.5 1011 Z M1152.5 1005.5 H1160 V1013.2 L1152.5 1012.2 Z" fill="#fff"/>
 <path d="M1170 1012 V1009 M1173.5 1012 V1006 M1177 1012 V1003 M1180.5 1012 V1000 M1184 1012 V997" stroke="#fff" stroke-width="2"/>
</svg>
<div class="t" style="left:266px;top:997px;font-size:16px;font-weight:bold;color:#3ab0f0">Ps</div>
<div class="t" style="left:1200px;top:990px;width:64px;text-align:center;color:#fff">17:26</div>
<div class="t" style="left:1200px;top:1006px;width:64px;text-align:center;color:#fff">2016-01-19</div>
</body></html>
